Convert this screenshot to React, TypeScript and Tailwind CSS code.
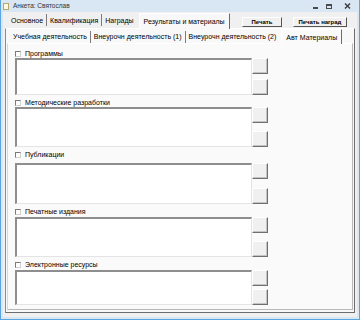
import React from 'react';

const font = { fontFamily: '"Liberation Sans", Arial, sans-serif' };

type Section = { label: string; mt: number; gap: number; h: number };

const sections: Section[] = [
  { label: 'Программы', mt: 3, gap: 0, h: 37 },
  { label: 'Методические разработки', mt: 3, gap: 0, h: 40 },
  { label: 'Публикации', mt: 3, gap: 4, h: 41 },
  { label: 'Печатные издания', mt: 3, gap: 1, h: 40 },
  { label: 'Электронные ресурсы', mt: 3, gap: 1, h: 35 },
];

const SideButton: React.FC = () => (
  <div className="w-[16px] h-[16px] bg-[#f0f0f0] border-t border-l border-t-white border-l-white border-r border-b border-r-[#6f6f6f] border-b-[#6f6f6f] shadow-[inset_-1px_-1px_0_#c4c4c4]" />
);

const Tab: React.FC<{ label: string; last?: boolean }> = ({ label, last }) => (
  <div className={`h-[12px] flex items-center px-[3px] whitespace-nowrap ${last ? '' : 'border-r border-[#7c7c7c]'}`}>
    {label}
  </div>
);

export default function App() {
  return (
    <div
      className="w-[360px] h-[320px] flex flex-col bg-[#d9e6f4] border-l border-r border-b border-[#5aa6dc] text-black overflow-hidden"
      style={font}
    >
      {/* title bar */}
      <div className="h-[12px] flex items-center pl-[2px] shrink-0">
        <div className="w-[6px] h-[7px] bg-[#fff8dc] border border-[#b7a770]" />
        <span className="ml-[4px] text-[6.5px] text-[#333] leading-none">Анкета: Святослав</span>
        <div className="ml-auto flex items-center h-[12px] mr-[2px]">
          <div className="w-[11px] h-[9px] flex items-end justify-center pb-[2px]">
            <div className="w-[5px] h-[2px] bg-[#4a4a4a]" />
          </div>
          <div className="w-[11px] h-[9px] flex items-center justify-center ml-[2px]">
            <div className="w-[6px] h-[5px] border border-t-2 border-[#4a4a4a]" />
          </div>
          <div className="w-[20px] h-[9px] flex items-center justify-center ml-[3px]">
            <svg width="7" height="6" viewBox="0 0 7 6">
              <path d="M1 0.5 L6 5.5 M6 0.5 L1 5.5" stroke="#3a3a3a" strokeWidth="1.4" />
            </svg>
          </div>
        </div>
      </div>

      {/* client area */}
      <div className="flex-1 mx-[2px] mb-[2px] bg-[#f0f0f0] flex flex-col">
        {/* top tabs */}
        <div className="h-[16px] flex items-end pl-[5px] text-[7px] leading-none shrink-0 whitespace-nowrap">
          <div className="flex items-center h-[14px] mb-[1px]">
            <Tab label="Основное" />
            <Tab label="Квалификация" />
            <Tab label="Награды" last />
          </div>
          <div className="h-[16px] -mb-[1px] relative z-10 ml-[2px] px-[4px] flex items-center bg-[#f8f8f8] border-t border-l border-t-white border-l-white border-r border-r-[#6c6c6c]">
            Результаты и материалы
          </div>
          <div className="ml-auto self-center flex items-center gap-[11px] mr-[10px] mt-[3px] font-bold text-[6px]">
            <div className="w-[40px] h-[10px] flex items-center justify-center bg-[#f0f0f0] border border-t-white border-l-white border-r-[#555] border-b-[#555]">
              Печать
            </div>
            <div className="w-[54px] h-[10px] flex items-center justify-center bg-[#f0f0f0] border border-t-white border-l-white border-r-[#555] border-b-[#555]">
              Печать наград
            </div>
          </div>
        </div>

        {/* outer tab panel */}
        <div className="flex-1 mx-[2px] mb-[4px] bg-[#f8f8f8] border border-t-white border-l-[#8b8b8b] border-r-[#6c6c6c] border-b-[#6c6c6c] flex flex-col">
          <div className="h-[14px] flex items-end pl-[4px] text-[7px] leading-none shrink-0 whitespace-nowrap">
            <div className="flex items-center h-[13px]">
              <Tab label="Учебная деятельность" />
              <Tab label="Внеурочн деятельность (1)" />
              <Tab label="Внеурочн деятельность (2)" last />
            </div>
            <div className="h-[15px] -mb-[1px] relative z-10 ml-[2px] px-[4px] flex items-center bg-[#fafafa] border-t border-l border-t-white border-l-white border-r border-r-[#6c6c6c]">
              Авт Материалы
            </div>
          </div>

          {/* inner panel */}
          <div className="flex-1 mx-[1px] mb-[2px] bg-[#fafafa] border border-t-white border-l-[#d8d8d8] border-r-[#b8b8b8] border-b-[#b8b8b8] pl-[7px] pt-[2px]">
            {sections.map((s) => (
              <div key={s.label} style={{ marginTop: s.mt }}>
                <div className="h-[9px] flex items-center text-[7px] leading-none">
                  <div className="w-[6px] h-[6px] bg-white border border-t-[#7a7a7a] border-l-[#7a7a7a] border-r-[#d0d0d0] border-b-[#d0d0d0]" />
                  <span className="ml-[4px]">{s.label}</span>
                </div>
                <div className="flex" style={{ marginTop: s.gap, height: s.h }}>
                  <div className="w-[237px] bg-white border-t-2 border-l-2 border-t-[#8e8e8e] border-l-[#8e8e8e] border-r border-b border-r-[#e4e4e4] border-b-[#e4e4e4]" />
                  <div className="flex flex-col justify-between">
                    <SideButton />
                    <SideButton />
                  </div>
                </div>
              </div>
            ))}
          </div>
        </div>
      </div>
    </div>
  );
}
